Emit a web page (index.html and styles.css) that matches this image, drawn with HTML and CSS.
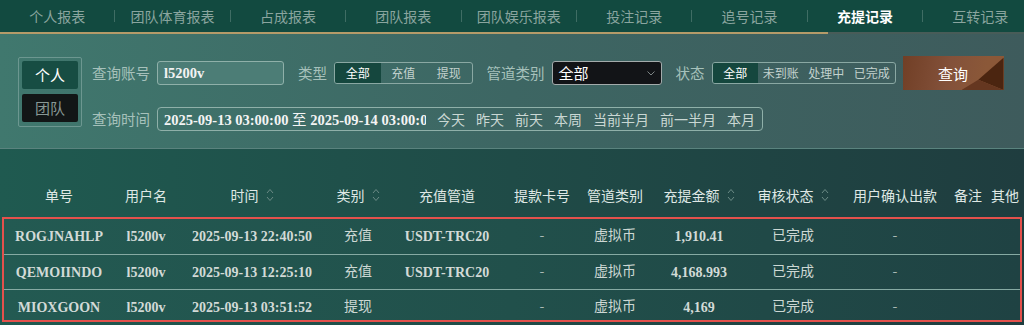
FILE: index.html
```html
<!DOCTYPE html>
<html lang="zh">

<head>
  <meta charset="UTF-8" />
  <title>充提记录</title>
  <link rel="stylesheet" href="styles.css">
</head>

<body>
  <nav class="tabs">
    <a class="tab">个人报表</a><span class="sep"></span>
    <a class="tab">团队体育报表</a><span class="sep"></span>
    <a class="tab">占成报表</a><span class="sep"></span>
    <a class="tab">团队报表</a><span class="sep"></span>
    <a class="tab">团队娱乐报表</a><span class="sep"></span>
    <a class="tab">投注记录</a><span class="sep"></span>
    <a class="tab">追号记录</a><span class="sep"></span>
    <a class="tab active">充提记录</a><span class="sep"></span>
    <a class="tab">互转记录</a>
  </nav>
  <div class="tabline"></div>

  <section class="filter">
    <div class="who">
      <span class="on">个人</span>
      <span class="off">团队</span>
    </div>
    <div class="fields">
      <div class="line">
        <label class="lbl">查询账号</label>
        <div class="acct">l5200v</div>
        <label class="lbl g">类型</label>
        <div class="seg type">
          <span class="on">全部</span><span>充值</span><span>提现</span>
        </div>
        <label class="lbl g">管道类别</label>
        <div class="sel">
          <span>全部</span>
          <svg width="8" height="5" viewBox="0 0 8 5"><path d="M0.5 0.5 L4 4 L7.5 0.5" fill="none" stroke="#7c8484" stroke-width="1"/></svg>
        </div>
        <label class="lbl g">状态</label>
        <div class="seg">
          <span class="on">全部</span><span>未到账</span><span>处理中</span><span>已完成</span>
        </div>
        <button class="go">查询</button>
      </div>
      <div class="line">
        <label class="lbl">查询时间</label>
        <div class="range">
          <div class="dt">2025-09-13 03:00:00 <span class="zh">至</span> 2025-09-14 03:00:00</div>
          <span>今天</span><span>昨天</span><span>前天</span><span>本周</span><span>当前半月</span><span>前一半月</span><span>本月</span>
        </div>
      </div>
    </div>
  </section>

  <section class="list">
    <div class="thead grid">
      <div>单号</div>
      <div>用户名</div>
      <div>时间<svg class="sort" width="8" height="16" viewBox="0 0 8 16"><path d="M1 6 L4 2.5 L7 6 M1 10 L4 13.5 L7 10" fill="none" stroke="#6b8b86" stroke-width="1"/></svg></div>
      <div>类别<svg class="sort" width="8" height="16" viewBox="0 0 8 16"><path d="M1 6 L4 2.5 L7 6 M1 10 L4 13.5 L7 10" fill="none" stroke="#6b8b86" stroke-width="1"/></svg></div>
      <div>充值管道</div>
      <div>提款卡号</div>
      <div>管道类别</div>
      <div>充提金额<svg class="sort" width="8" height="16" viewBox="0 0 8 16"><path d="M1 6 L4 2.5 L7 6 M1 10 L4 13.5 L7 10" fill="none" stroke="#6b8b86" stroke-width="1"/></svg></div>
      <div>审核状态<svg class="sort" width="8" height="16" viewBox="0 0 8 16"><path d="M1 6 L4 2.5 L7 6 M1 10 L4 13.5 L7 10" fill="none" stroke="#6b8b86" stroke-width="1"/></svg></div>
      <div>用户确认出款</div>
      <div>备注</div>
      <div>其他</div>
    </div>

    <div class="rows">
      <div class="row grid">
        <div class="en">ROGJNAHLP</div>
        <div class="en">l5200v</div>
        <div class="en">2025-09-13 22:40:50</div>
        <div>充值</div>
        <div class="en">USDT-TRC20</div>
        <div class="dash">-</div>
        <div>虚拟币</div>
        <div class="en">1,910.41</div>
        <div>已完成</div>
        <div class="dash">-</div>
        <div></div>
        <div></div>
      </div>
      <div class="row grid">
        <div class="en">QEMOIINDO</div>
        <div class="en">l5200v</div>
        <div class="en">2025-09-13 12:25:10</div>
        <div>充值</div>
        <div class="en">USDT-TRC20</div>
        <div class="dash">-</div>
        <div>虚拟币</div>
        <div class="en">4,168.993</div>
        <div>已完成</div>
        <div class="dash">-</div>
        <div></div>
        <div></div>
      </div>
      <div class="row grid">
        <div class="en">MIOXGOON</div>
        <div class="en">l5200v</div>
        <div class="en">2025-09-13 03:51:52</div>
        <div>提现</div>
        <div></div>
        <div class="dash">-</div>
        <div>虚拟币</div>
        <div class="en">4,169</div>
        <div>已完成</div>
        <div class="dash">-</div>
        <div></div>
        <div></div>
      </div>
    </div>
  </section>
</body>

</html>
```

FILE: styles.css
```css
*,
::before,
::after {
  box-sizing: border-box;
}

html {
  font-family: "Noto Sans CJK SC", "Noto Sans", sans-serif;
}

body {
  margin: 0;
  width: 1024px;
  height: 325px;
  overflow: hidden;
  background: #1f4a46;
}

/* tabs */
.tabs {
  display: flex;
  align-items: center;
  height: 32px;
  background: #124a40;
  overflow: hidden;
  white-space: nowrap;
}

.tab {
  flex: 0 0 114.4px;
  text-align: center;
  font-size: 14px;
  line-height: 32px;
  color: #8aa59f;
}

.tab.active {
  color: #fff;
  font-weight: bold;
}

.sep {
  flex: 0 0 1px;
  height: 12px;
  background: #3f6d64;
}

.tabline {
  height: 2px;
  background: linear-gradient(to right, #b59b69 0 828px, #485c58 828px);
}

/* filter */
.filter {
  display: flex;
  gap: 10px;
  height: 115px;
  padding: 23px 0 0 18px;
  background: linear-gradient(90deg, #40786e, #3d6663 50%, #3e5b5c);
  border-bottom: 1px solid #5a837e;
}

.who {
  width: 64px;
  height: 70px;
  padding: 3px;
  border: 1px solid #6c9790;
  border-radius: 2px;
  display: flex;
  flex-direction: column;
  gap: 5px;
}

.who span {
  height: 28px;
  line-height: 28px;
  text-align: center;
  font-size: 15px;
  border-radius: 2px;
}

.who .on {
  background: #174d43;
  color: #fff;
}

.who .off {
  background: #121616;
  color: #889894;
}

.fields {
  display: flex;
  flex-direction: column;
  gap: 22px;
  margin-top: 4px;
}

.line {
  display: flex;
  align-items: center;
  height: 24px;
}

.lbl {
  font-size: 14.5px;
  line-height: 24px;
  color: #a6c1bb;
  margin-right: 7px;
  white-space: nowrap;
}

.lbl.g {
  margin-left: 14px;
}

.acct {
  width: 127px;
  height: 24px;
  padding-left: 6px;
  border: 1px solid #8fb0a9;
  border-radius: 3px;
  background: #4c7d76;
  font: bold 14.5px/22px "Liberation Serif", serif;
  color: #f2f2f2;
}

.seg {
  display: flex;
  height: 22px;
  border: 1px solid #8aa8a3;
  border-radius: 3px;
  overflow: hidden;
}

.seg span {
  width: 45.5px;
  text-align: center;
  font-size: 12px;
  line-height: 20px;
  color: #c3d2ce;
}

.seg .on {
  background: #15473e;
  color: #fff;
}

.sel {
  width: 110px;
  height: 24px;
  padding: 0 6px 0 6px;
  background: #121417;
  border: 1px solid #a3abab;
  border-radius: 3px;
  display: flex;
  align-items: center;
  justify-content: space-between;
  color: #fff;
  font-size: 15px;
  line-height: 22px;
}

.go {
  position: relative;
  width: 101px;
  height: 34px;
  margin-left: 7px;
  border: 0;
  padding: 0;
  overflow: hidden;
  background: linear-gradient(100deg, #713f26 0%, #83513a 45%, #8b5838 80%);
  color: #fff;
  font-family: inherit;
  font-size: 15px;
}

.go::before {
  content: "";
  position: absolute;
  right: 0;
  top: 0;
  width: 42px;
  height: 100%;
  background: #4b2510;
  clip-path: polygon(100% 5%, 100% 100%, 40% 70%);
}

.go::after {
  content: "";
  position: absolute;
  right: 0;
  top: 0;
  width: 42px;
  height: 100%;
  background: #653720;
  clip-path: polygon(40% 70%, 100% 100%, 0 100%);
}

.range {
  width: 606px;
  height: 24px;
  border: 1px solid #8fb0a9;
  border-radius: 4px;
  display: flex;
  align-items: center;
  gap: 11px;
  font-size: 14px;
  line-height: 22px;
  color: #c9d7d3;
  white-space: nowrap;
}

.range .dt {
  width: 268px;
  padding-left: 6px;
  overflow: hidden;
  font: bold 14.5px/22px "Liberation Serif", serif;
  color: #f4f4f4;
}

.range .dt .zh {
  font-family: "Noto Sans CJK SC", sans-serif;
  font-weight: normal;
}

/* list */
.list {
  height: 176px;
  padding-top: 24px;
  background: linear-gradient(90deg, #1f5a50, #1f4b47 50%, #1f3d3f);
}

.grid {
  display: grid;
  grid-template-columns: 110px 64px 148px 64px 114px 76px 70px 98px 90px 114px 32px 42px;
}

.thead > div {
  display: flex;
  justify-content: center;
  align-items: center;
  white-space: nowrap;
}

.thead {
  height: 44px;
  margin-left: 4px;
  font-size: 14px;
  color: #dfe8e5;
}

.sort {
  margin-left: 7px;
}

.rows {
  height: 105px;
  margin: 0 2px;
  border: 2px solid #e4514c;
  overflow: hidden;
  background: linear-gradient(90deg, #235a52, #21504b 50%, #1f4243);
}

.row {
  height: 35px;
  font-size: 14px;
  color: #cdd8d4;
}

.row > div {
  text-align: center;
  white-space: nowrap;
  line-height: 31px;
}

.row + .row {
  border-top: 1px solid #86aaa3;
}

.row .en {
  font: bold 14px/35px "Liberation Serif", serif;
  color: #d2dad7;
}

.row .dash {
  color: #a9b9b5;
}
```
